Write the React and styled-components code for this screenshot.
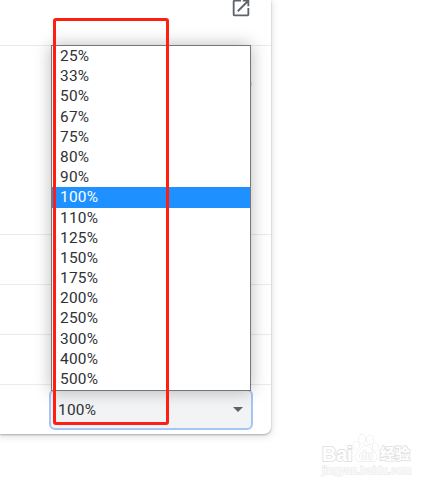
import React, { useState } from 'react';
import styled, { createGlobalStyle } from 'styled-components';

const zoomLevels = [25, 33, 50, 67, 75, 80, 90, 100, 110, 125, 150, 175, 200, 250, 300, 400, 500];

const App = () => {
  const [zoom, setZoom] = useState(100);

  return (
    <Page>
      <GlobalStyle />
      <Card>
        <LinkRow>
          <OpenIcon viewBox="0 0 24 24">
            <path d="M19 19H5V5h7V3H5a2 2 0 0 0-2 2v14a2 2 0 0 0 2 2h14c1.1 0 2-.9 2-2v-7h-2v7zM14 3v2h3.59l-9.83 9.83 1.41 1.41L19 6.41V10h2V3h-7z" />
          </OpenIcon>
        </LinkRow>
        <Row $height={189}>
          <Toggle />
        </Row>
        <Row $height={50} />
        <Row $height={50} />
        <Row $height={50} />
        <Row $height={50}>
          <Select>
            <span>{zoom}%</span>
            <Caret />
            <Options>
              {zoomLevels.map((level) => (
                <Option key={level} $selected={level === zoom} onClick={() => setZoom(level)}>
                  {level}%
                </Option>
              ))}
            </Options>
            <Highlight />
          </Select>
        </Row>
      </Card>
      <Watermark>
        <Brand>
          <Latin>Bai</Latin>
          <Paw viewBox="0 0 28 29">
            <ellipse cx="4.2" cy="11.5" rx="3" ry="4" />
            <ellipse cx="10" cy="5.2" rx="3.1" ry="4.5" />
            <ellipse cx="18" cy="5.8" rx="3.1" ry="4.5" />
            <ellipse cx="23.5" cy="13" rx="3" ry="4" />
            <path d="M14 11.5c-4 0-4.5 4-8 6.5-4.500 3.200-3.500 9.500 1.500 9.500 2.500 0 4-.7 6.500-.7s4 .7 6.500.7c5 0 6-6.300 1.500-9.500-3.500-2.500-4-6.500-8-6.500z" />
            <text x="14" y="25" textAnchor="middle">du</text>
          </Paw>
          <Chinese>经验</Chinese>
        </Brand>
        <Site>jingyan.baidu.com</Site>
      </Watermark>
    </Page>
  );
};

const GlobalStyle = createGlobalStyle`
  body {
    margin: 0;
    background: #fff;
    overflow: hidden;
  }
`;

const Page = styled.div`
  position: relative;
  box-sizing: border-box;
  width: 439px;
  height: 488px;
  overflow: hidden;
  background: #fff;
  font-family: Roboto, "Liberation Sans", sans-serif;
  font-size: 15.4px;
  color: #303135;
`;

const Card = styled.div`
  width: 271px;
  height: 434px;
  box-sizing: border-box;
  background: #fff;
  border-radius: 0 0 7px 0;
  box-shadow: 0 1px 2px rgba(60, 64, 67, 0.36), 0 2px 7px 1px rgba(60, 64, 67, 0.15);
`;

const LinkRow = styled.div`
  display: flex;
  justify-content: flex-end;
  height: 45px;
  padding-right: 19px;
  box-sizing: border-box;
`;

const OpenIcon = styled.svg`
  width: 22px;
  height: 22px;
  margin-top: -3px;
  fill: #5f6368;
`;

const Row = styled.div`
  display: flex;
  justify-content: flex-end;
  box-sizing: border-box;
  height: ${({ $height }) => $height}px;
  padding: 4px 18px 0 0;
  border-top: 1px solid #ebebeb;
`;

const Toggle = styled.div`
  width: 26px;
  height: 10px;
  margin: 29px 1px 0 0;
  border-radius: 5px;
  background: #dfe1e5;
`;

const Select = styled.div`
  position: relative;
  display: flex;
  align-items: center;
  justify-content: space-between;
  box-sizing: border-box;
  width: 204px;
  height: 41px;
  padding: 0 8px 0 7px;
  border: 2px solid #a5c5f8;
  border-radius: 6px;
  background: #f1f3f4;
  letter-spacing: 0.25px;
`;

const Caret = styled.i`
  border: 5px solid transparent;
  border-top-color: #5f6368;
  border-bottom: 0;
`;

const Options = styled.div`
  position: absolute;
  left: 0;
  bottom: 37px;
  box-sizing: border-box;
  width: 200px;
  height: 346px;
  border: 1px solid #767676;
  background: #fff;
  box-shadow: 0 0 16px rgba(0, 0, 0, 0.27);
`;

const Option = styled.div`
  height: 20.2px;
  padding-left: 8px;
  line-height: 20.2px;
  color: ${({ $selected }) => ($selected ? '#fff' : '#303135')};
  background: ${({ $selected }) => ($selected ? '#1e90ff' : 'transparent')};
`;

const Highlight = styled.div`
  position: absolute;
  left: 2px;
  bottom: 3px;
  box-sizing: border-box;
  width: 116px;
  height: 407px;
  border: 3px solid #ff1e12;
  border-radius: 3px;
  pointer-events: none;
`;

const Watermark = styled.div`
  position: absolute;
  left: 322px;
  top: 433px;
  width: 90px;
  color: #fff;
  font-family: "Liberation Sans", Arial, sans-serif;
  -webkit-text-stroke: 1.8px #e2e2e2;
  paint-order: stroke fill;
`;

const Brand = styled.div`
  display: flex;
  align-items: flex-end;
  height: 31px;
`;

const Latin = styled.span`
  width: 30px;
  font-size: 20px;
  font-weight: 700;
  line-height: 20px;
  letter-spacing: -0.3px;
`;

const Paw = styled.svg`
  flex: none;
  width: 28px;
  height: 29px;
  margin-bottom: 1px;
  fill: #fff;
  stroke: #e4e4e4;
  stroke-width: 1;

  text {
    font-size: 11px;
    font-weight: 700;
  }
`;

const Chinese = styled.span`
  font-family: "Noto Sans CJK SC", sans-serif;
  font-size: 15px;
  font-weight: 700;
  line-height: 22px;
`;

const Site = styled.div`
  font-size: 11px;
  line-height: 13px;
  letter-spacing: 0.05px;
  white-space: nowrap;
  -webkit-text-stroke: 1.5px #ececec;
`;

export default App;
